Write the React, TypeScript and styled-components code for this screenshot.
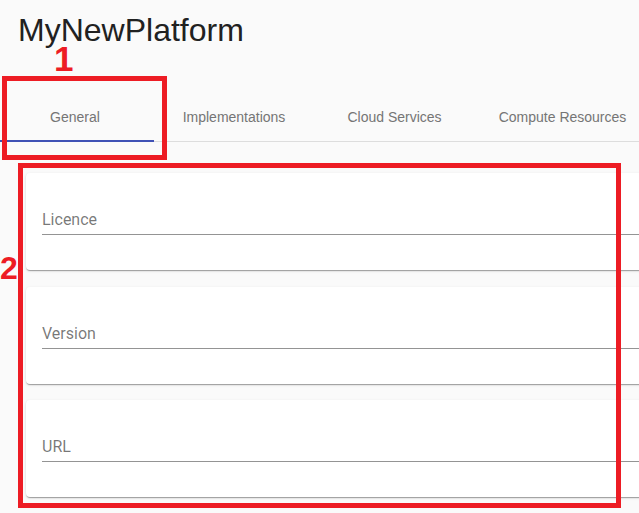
import React from 'react';
import styled, { createGlobalStyle } from 'styled-components';

const GlobalStyle = createGlobalStyle`
  html, body {
    margin: 0;
    padding: 0;
    overflow: hidden;
    background-color: #fafafa;
  }
`;

const Page = styled.div`
  position: relative;
  width: 639px;
  height: 513px;
  overflow: hidden;
  background-color: #fafafa;
  font-family: "Liberation Sans", Arial, sans-serif;
`;

const Header = styled.header`
  padding: 12px 0 0 18px;
  height: 93px;
  box-sizing: border-box;
`;

const Title = styled.h1`
  margin: 0;
  font-size: 32px;
  font-weight: 400;
  line-height: 37px;
  color: #212121;
`;

const TabBar = styled.nav`
  display: flex;
  height: 48px;
  border-bottom: 1px solid #dddddd;
  width: 700px;
`;

const Tab = styled.div<{ $width: number; $active?: boolean }>`
  position: relative;
  flex: none;
  width: ${p => p.$width}px;
  display: flex;
  align-items: center;
  justify-content: center;
  font-size: 14px;
  color: #757575;
  white-space: nowrap;

  &::after {
    content: '';
    display: ${p => (p.$active ? 'block' : 'none')};
    position: absolute;
    left: 0;
    bottom: -1px;
    width: 154px;
    height: 2px;
    background-color: #3f51b5;
  }
`;

const Cards = styled.div`
  display: flex;
  flex-direction: column;
  gap: 16.5px;
  padding: 31px 0 0 26px;
`;

const Card = styled.section`
  width: 680px;
  height: 97px;
  box-sizing: border-box;
  padding: 0 16px;
  background-color: #ffffff;
  border-radius: 4px;
  box-shadow: 0px 2px 1px -1px rgba(0, 0, 0, 0.2), 0px 1px 1px 0px rgba(0, 0, 0, 0.14),
    0px 1px 3px 0px rgba(0, 0, 0, 0.12);
`;

const Field = styled.input`
  display: block;
  width: 100%;
  box-sizing: border-box;
  margin: 31px 0 0;
  padding: 6px 0 5px;
  border: none;
  border-bottom: 1px solid rgba(0, 0, 0, 0.42);
  outline: none;
  background: transparent;
  font-family: Roboto, "Liberation Sans", sans-serif;
  font-size: 16px;
  line-height: 19px;
  height: 31px;
  color: rgba(0, 0, 0, 0.87);

  &::placeholder {
    color: rgba(0, 0, 0, 0.54);
    opacity: 1;
  }
`;

const Marker = styled.div<{ $left: number; $top: number; $width: number; $height: number }>`
  position: absolute;
  left: ${p => p.$left}px;
  top: ${p => p.$top}px;
  width: ${p => p.$width}px;
  height: ${p => p.$height}px;
  box-sizing: border-box;
  border: 5px solid #ed1c24;
  pointer-events: none;
`;

const MarkerNumber = styled.span<{ $left: number; $top: number; $size: number }>`
  position: absolute;
  left: ${p => p.$left}px;
  top: ${p => p.$top}px;
  font-family: "Liberation Sans", Arial, sans-serif;
  font-weight: 700;
  font-size: ${p => p.$size}px;
  line-height: 1;
  color: #ed1c24;
`;

const tabs = [
  { label: 'General', width: 150 },
  { label: 'Implementations', width: 168 },
  { label: 'Cloud Services', width: 153 },
  { label: 'Compute Resources', width: 183 },
];

const fields = ['Licence', 'Version', 'URL'];

const App: React.FC = () => {
  return (
    <Page>
      <GlobalStyle />
      <Header>
        <Title>MyNewPlatform</Title>
      </Header>
      <TabBar>
        {tabs.map((tab, i) => (
          <Tab key={tab.label} $width={tab.width} $active={i === 0}>
            {tab.label}
          </Tab>
        ))}
      </TabBar>
      <Cards>
        {fields.map(name => (
          <Card key={name}>
            <Field type="text" placeholder={name} />
          </Card>
        ))}
      </Cards>

      <Marker $left={2} $top={76} $width={165} $height={84} />
      <MarkerNumber $left={54} $top={41} $size={35}>1</MarkerNumber>
      <Marker $left={18} $top={163} $width={603} $height={345} />
      <MarkerNumber $left={0} $top={252} $size={32}>2</MarkerNumber>
    </Page>
  );
};

export default App;
